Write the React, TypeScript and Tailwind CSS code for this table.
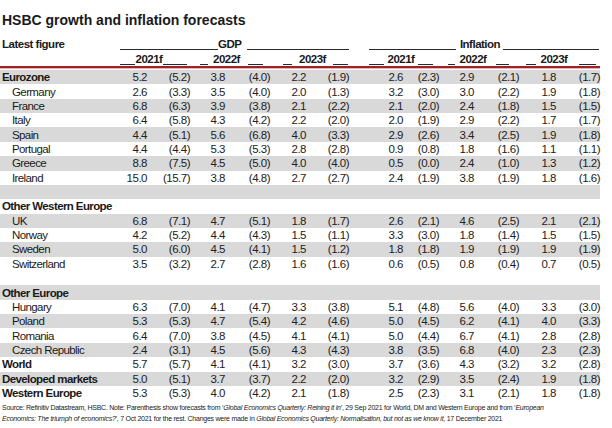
import React from "react";

type Row = {
  label: string;
  kind: "group" | "country" | "blank";
  shade: boolean;
  v?: string[];
};

const rows: Row[] = [
  { label: "Eurozone", kind: "group", shade: true, v: ["5.2", "(5.2)", "3.8", "(4.0)", "2.2", "(1.9)", "2.6", "(2.3)", "2.9", "(2.1)", "1.8", "(1.7)"] },
  { label: "Germany", kind: "country", shade: false, v: ["2.6", "(3.3)", "3.5", "(4.0)", "2.0", "(1.3)", "3.2", "(3.0)", "3.0", "(2.2)", "1.9", "(1.8)"] },
  { label: "France", kind: "country", shade: true, v: ["6.8", "(6.3)", "3.9", "(3.8)", "2.1", "(2.2)", "2.1", "(2.0)", "2.4", "(1.8)", "1.5", "(1.5)"] },
  { label: "Italy", kind: "country", shade: false, v: ["6.4", "(5.8)", "4.3", "(4.2)", "2.2", "(2.0)", "2.0", "(1.9)", "2.9", "(2.2)", "1.7", "(1.7)"] },
  { label: "Spain", kind: "country", shade: true, v: ["4.4", "(5.1)", "5.6", "(6.8)", "4.0", "(3.3)", "2.9", "(2.6)", "3.4", "(2.5)", "1.9", "(1.8)"] },
  { label: "Portugal", kind: "country", shade: false, v: ["4.4", "(4.4)", "5.3", "(5.3)", "2.8", "(2.8)", "0.9", "(0.8)", "1.8", "(1.6)", "1.1", "(1.1)"] },
  { label: "Greece", kind: "country", shade: true, v: ["8.8", "(7.5)", "4.5", "(5.0)", "4.0", "(4.0)", "0.5", "(0.0)", "2.4", "(1.0)", "1.3", "(1.2)"] },
  { label: "Ireland", kind: "country", shade: false, v: ["15.0", "(15.7)", "3.8", "(4.8)", "2.7", "(2.7)", "2.4", "(1.9)", "3.8", "(1.9)", "1.8", "(1.6)"] },
  { label: "", kind: "blank", shade: true },
  { label: "Other Western Europe", kind: "group", shade: false },
  { label: "UK", kind: "country", shade: true, v: ["6.8", "(7.1)", "4.7", "(5.1)", "1.8", "(1.7)", "2.6", "(2.1)", "4.6", "(2.5)", "2.1", "(2.1)"] },
  { label: "Norway", kind: "country", shade: false, v: ["4.2", "(5.2)", "4.4", "(4.3)", "1.5", "(1.1)", "3.3", "(3.0)", "1.8", "(1.4)", "1.5", "(1.5)"] },
  { label: "Sweden", kind: "country", shade: true, v: ["5.0", "(6.0)", "4.5", "(4.1)", "1.5", "(1.2)", "1.8", "(1.8)", "1.9", "(1.9)", "1.9", "(1.9)"] },
  { label: "Switzerland", kind: "country", shade: false, v: ["3.5", "(3.2)", "2.7", "(2.8)", "1.6", "(1.6)", "0.6", "(0.5)", "0.8", "(0.4)", "0.7", "(0.5)"] },
  { label: "", kind: "blank", shade: false },
  { label: "Other Europe", kind: "group", shade: true },
  { label: "Hungary", kind: "country", shade: false, v: ["6.3", "(7.0)", "4.1", "(4.7)", "3.3", "(3.8)", "5.1", "(4.8)", "5.6", "(4.0)", "3.3", "(3.0)"] },
  { label: "Poland", kind: "country", shade: true, v: ["5.3", "(5.3)", "4.7", "(5.4)", "4.2", "(4.6)", "5.0", "(4.5)", "6.2", "(4.1)", "4.0", "(3.3)"] },
  { label: "Romania", kind: "country", shade: false, v: ["6.4", "(7.0)", "3.8", "(4.5)", "4.1", "(4.1)", "5.0", "(4.4)", "6.7", "(4.1)", "2.8", "(2.8)"] },
  { label: "Czech Republic", kind: "country", shade: true, v: ["2.4", "(3.1)", "4.5", "(5.6)", "4.3", "(4.3)", "3.8", "(3.5)", "6.8", "(4.0)", "2.3", "(2.3)"] },
  { label: "World", kind: "group", shade: false, v: ["5.7", "(5.7)", "4.1", "(4.1)", "3.2", "(3.0)", "3.7", "(3.6)", "4.3", "(3.2)", "3.2", "(2.8)"] },
  { label: "Developed markets", kind: "group", shade: true, v: ["5.0", "(5.1)", "3.7", "(3.7)", "2.2", "(2.0)", "3.2", "(2.9)", "3.5", "(2.4)", "1.9", "(1.8)"] },
  { label: "Western Europe", kind: "group", shade: false, v: ["5.3", "(5.3)", "4.0", "(4.2)", "2.1", "(1.8)", "2.5", "(2.3)", "3.1", "(2.1)", "1.8", "(1.8)"] },
];

const cols =
  "grid grid-cols-[110px_37px_43px_35px_45px_36px_43px_54px_36px_35px_45px_37px_44px]";

function Rule({ className }: { className: string }) {
  return <div className={`h-px bg-[#2a2a2a] mb-px ${className}`} />;
}

function YearLabel({ text, className }: { text: string; className: string }) {
  return <div className={`text-center whitespace-nowrap ${className}`}>{text}</div>;
}

export default function App() {
  return (
    <div className="w-[612px] h-[428px] overflow-hidden bg-white text-[#1a1a1a] font-['Liberation_Sans_Narrow','Arial_Narrow','Liberation_Sans',Arial,sans-serif]">
      <h1 className="pt-[12px] pl-[2px] text-[14px] leading-[16px] font-bold font-['Liberation_Sans',Arial,sans-serif]">
        HSBC growth and inflation forecasts
      </h1>

      {/* group headers */}
      <div className="mt-[9px] flex items-end h-[14px] text-[11.5px] leading-[14px] font-bold tracking-[-0.5px]">
        <div className="w-[120px] pl-[2px]">Latest figure</div>
        <Rule className="w-[98px]" />
        <div className="w-[23px] text-center">GDP</div>
        <Rule className="ml-[6px] w-[102px]" />
        <Rule className="ml-[20px] w-[87px]" />
        <div className="ml-[3px] w-[42px] text-center">Inflation</div>
        <Rule className="ml-[2px] w-[96px]" />
      </div>

      {/* years */}
      <div className="mt-px flex items-end h-[14px] text-[11.5px] leading-[14px] font-bold tracking-[-0.5px]">
        <Rule className="ml-[120px] w-[15px]" />
        <YearLabel text="2021f" className="w-[28px]" />
        <Rule className="w-[24px]" />

        <Rule className="ml-[13px] w-[8px]" />
        <YearLabel text="2022f" className="ml-[4px] w-[29px]" />
        <Rule className="ml-[7px] w-[15px]" />

        <Rule className="ml-[20px] w-[9px]" />
        <YearLabel text="2023f" className="ml-[6px] w-[29px]" />
        <Rule className="ml-[6px] w-[15px]" />

        <Rule className="ml-[21px] w-[15px]" />
        <YearLabel text="2021f" className="ml-px w-[32px]" />
        <Rule className="ml-px w-[15px]" />

        <Rule className="ml-[15px] w-[7px]" />
        <YearLabel text="2022f" className="ml-[4px] w-[28px]" />
        <Rule className="ml-[9px] w-[13px]" />

        <Rule className="ml-[17px] w-[10px]" />
        <YearLabel text="2023f" className="ml-[3px] w-[30px]" />
        <Rule className="ml-[10px] w-[17px]" />
      </div>

      <div className="w-[600px]">
        <div className="h-[2px] bg-[#9e2226]" />
        <div className="h-px bg-[#e9b3b3]" />
        <div className="mt-px">
          {rows.map((r, i) => (
            <div
              key={i}
              className={`${cols} h-[14.36px] items-center leading-[14px] text-[11.5px] tracking-[-0.6px] ${r.shade ? "bg-[#d9d9d9]" : ""}`}
            >
              <div className={r.kind === "country" ? "pl-[12px] whitespace-nowrap" : "pl-[2px] font-bold whitespace-nowrap"}>
                {r.label}
              </div>
              {r.v?.map((x, j) => (
                <div key={j} className="text-right tracking-[-0.5px] text-[#222]">
                  {x}
                </div>
              ))}
            </div>
          ))}
        </div>
      </div>

      <p className="mt-[3px] pl-[2px] text-[7px] leading-[10.5px] tracking-[-0.25px] text-[#222] whitespace-nowrap">
        Source: Refinitiv Datastream, HSBC. Note: Parenthesis show forecasts from ‘
        <i>Global Economics Quarterly: Reining it in</i>’, 29 Sep 2021 for World, DM and Western Europe and from ‘
        <i>European</i>
        <br />
        <i>Economics: The triumph of economics?</i>’, 7 Oct 2021 for the rest. Changes were made in{" "}
        <i>Global Economics Quarterly: Normalisation, but not as we know it</i>, 17 December 2021
      </p>
    </div>
  );
}
